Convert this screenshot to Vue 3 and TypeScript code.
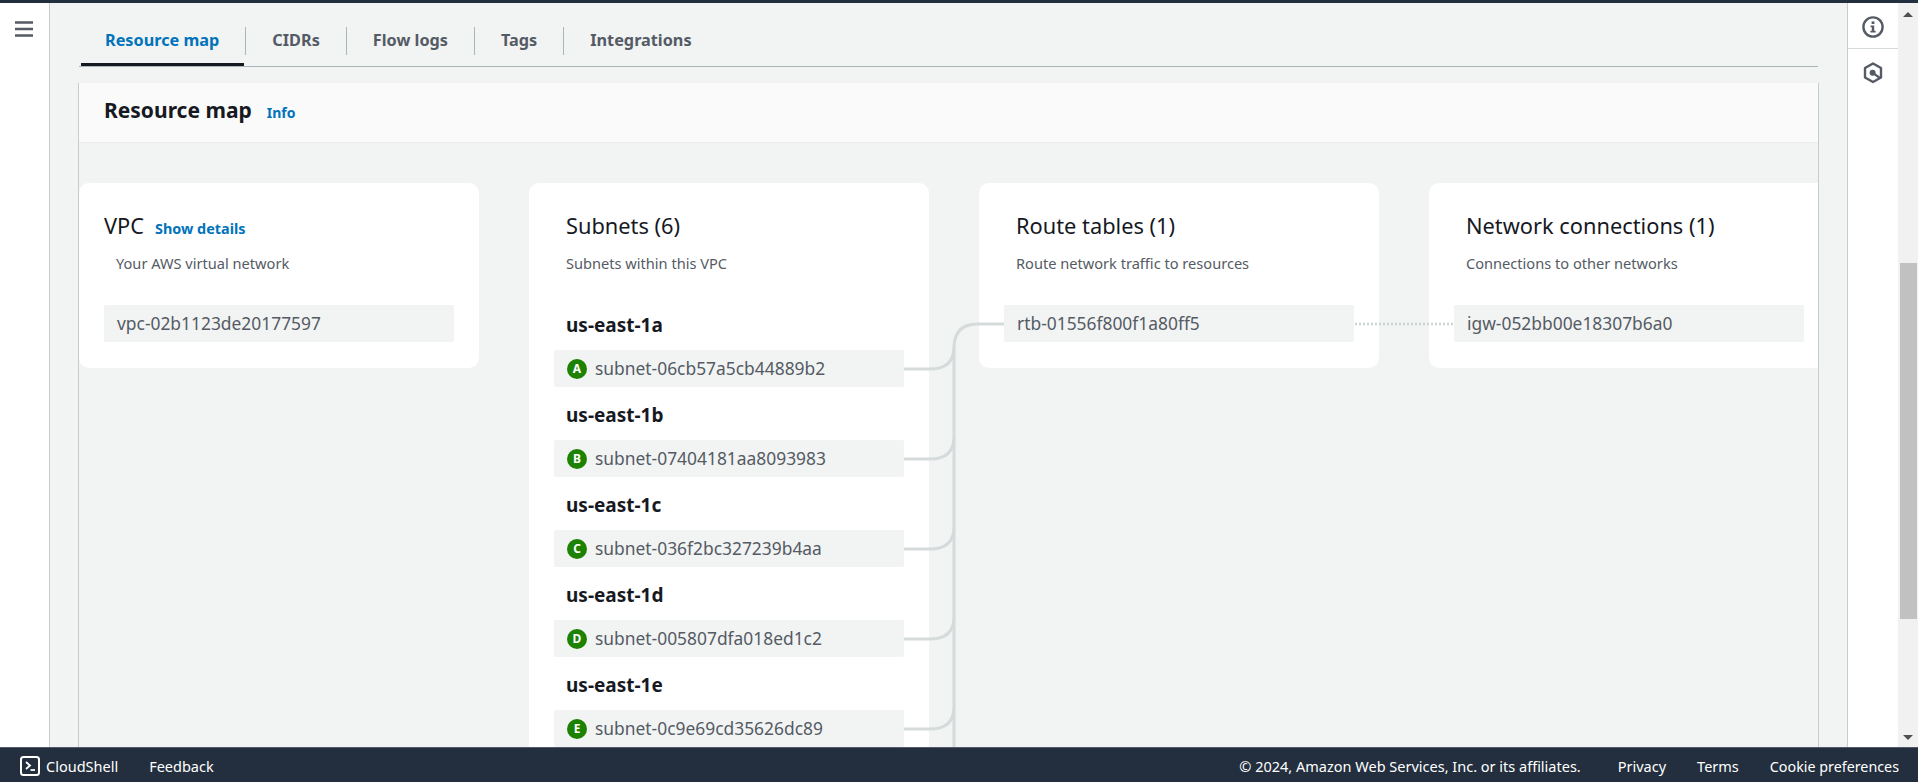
<script setup lang="ts">
const tabs = ['Resource map', 'CIDRs', 'Flow logs', 'Tags', 'Integrations']

const subnets = [
  { zone: 'us-east-1a', badge: 'A', id: 'subnet-06cb57a5cb44889b2' },
  { zone: 'us-east-1b', badge: 'B', id: 'subnet-07404181aa8093983' },
  { zone: 'us-east-1c', badge: 'C', id: 'subnet-036f2bc327239b4aa' },
  { zone: 'us-east-1d', badge: 'D', id: 'subnet-005807dfa018ed1c2' },
  { zone: 'us-east-1e', badge: 'E', id: 'subnet-0c9e69cd35626dc89' }
]

// connector coordinates are relative to the map's top left corner
const routeY = 181
const links = subnets.map((_, i) => {
  const y = 226 + i * 90
  return `M825 ${y} H851 Q875 ${y} 875 ${y - 22}`
})
const trunk = `M875 640 V${routeY + 24} Q875 ${routeY} 899 ${routeY} H925`
</script>

<template>
  <div class="page">
    <div class="top-strip"></div>
    <div class="body">
      <nav class="side-nav">
        <svg class="burger" width="18" height="16" viewBox="0 0 18 16">
          <path d="M0 1.5H18M0 8H18M0 14.5H18" stroke="#545b64" stroke-width="2.6" fill="none" />
        </svg>
      </nav>

      <main class="main">
        <div class="tabs">
          <div v-for="(tab, i) in tabs" :key="tab" class="tab" :class="{ active: i === 0 }">
            <span class="tab-label">{{ tab }}</span>
          </div>
        </div>

        <section class="panel">
          <header class="panel-head">
            <h2>Resource map</h2>
            <a class="info">Info</a>
          </header>

          <div class="map">
            <div class="card">
              <div class="title-row">
                <h3 class="flush">VPC</h3>
                <a class="details">Show details</a>
              </div>
              <p class="desc">Your AWS virtual network</p>
              <div class="item">vpc-02b1123de20177597</div>
            </div>

            <div class="card">
              <div class="title-row"><h3>Subnets (6)</h3></div>
              <p class="desc">Subnets within this VPC</p>
              <div class="zones">
                <div v-for="s in subnets" :key="s.id" class="zone">
                  <h4>{{ s.zone }}</h4>
                  <div class="item with-badge">
                    <span class="badge">{{ s.badge }}</span>
                    {{ s.id }}
                  </div>
                </div>
              </div>
            </div>

            <div class="card">
              <div class="title-row"><h3>Route tables (1)</h3></div>
              <p class="desc">Route network traffic to resources</p>
              <div class="item">rtb-01556f800f1a80ff5</div>
            </div>

            <div class="card">
              <div class="title-row"><h3>Network connections (1)</h3></div>
              <p class="desc">Connections to other networks</p>
              <div class="item">igw-052bb00e18307b6a0</div>
            </div>

            <svg class="links" width="1740" height="640" viewBox="0 0 1740 640" fill="none">
              <path v-for="d in links" :key="d" :d="d" stroke="#d5dbdb" stroke-width="3" />
              <path :d="trunk" stroke="#d5dbdb" stroke-width="3" />
              <path d="M1276 181 H1375" stroke="#ccd3d3" stroke-width="2.4" stroke-dasharray="2 2" />
            </svg>
          </div>
        </section>
      </main>

      <aside class="tools">
        <div class="tool first">
          <svg width="24" height="24" viewBox="0 0 24 24" fill="none">
            <circle cx="12" cy="12" r="9.6" stroke="#545b64" stroke-width="2.4" />
            <rect x="10.6" y="6.4" width="2.8" height="2.6" fill="#545b64" />
            <path d="M9.6 10.4H13.2V15.8H14.6V17.6H9.4V15.8H10.8V12.2H9.6Z" fill="#545b64" />
          </svg>
        </div>
        <div class="tool">
          <svg width="20" height="22" viewBox="0 0 20 22" fill="none">
            <path d="M10 1.5L18 6V15.5L10 20L2 15.5V6Z" stroke="#545b64" stroke-width="2.4" stroke-linejoin="round" />
            <circle cx="9.6" cy="10.8" r="3" fill="#545b64" />
            <path d="M10 11.2L17 16" stroke="#545b64" stroke-width="2.2" />
          </svg>
        </div>
      </aside>

      <div class="scrollbar">
        <span class="arrow up"></span>
        <span class="thumb"></span>
        <span class="arrow down"></span>
      </div>
    </div>

    <footer class="footer">
      <div class="foot-left">
        <span class="shell">
          <svg width="20" height="20" viewBox="0 0 20 20" fill="none">
            <rect x="1" y="1" width="18" height="18" rx="2.5" stroke="#fff" stroke-width="2" />
            <path d="M6 6L10 9.5L6 13" stroke="#fff" stroke-width="1.8" />
            <path d="M10.5 14H15" stroke="#fff" stroke-width="1.8" />
          </svg>
          CloudShell
        </span>
        <span>Feedback</span>
      </div>
      <div class="foot-right">
        <span class="copy">© 2024, Amazon Web Services, Inc. or its affiliates.</span>
        <span>Privacy</span>
        <span>Terms</span>
        <span class="cookie">Cookie preferences</span>
      </div>
    </footer>
  </div>
</template>

<style>
html,
body {
  margin: 0;
  overflow: hidden;
}
</style>

<style scoped>
.page {
  display: flex;
  flex-direction: column;
  height: 782px;
  overflow: hidden;
  font-family: 'Noto Sans', 'Open Sans', sans-serif;
  color: #16191f;
  background: #f2f3f3;
}
.top-strip {
  flex: none;
  height: 3px;
  background: #232f3e;
}
.body {
  flex: 1;
  min-height: 0;
  display: flex;
  overflow: hidden;
}
.side-nav {
  flex: none;
  width: 49px;
  background: #fff;
  border-right: 1px solid #c9cdcd;
}
.burger {
  display: block;
  margin: 18px 0 0 15px;
}
.main {
  flex: 1;
  min-width: 0;
  padding: 0 28px;
  overflow: hidden;
}
.tabs {
  display: flex;
  height: 63px;
  margin: 0 1px;
  border-bottom: 1px solid #aab7b8;
}
.tab {
  position: relative;
  display: flex;
  align-items: center;
  padding: 12px 0 0;
}
.tab-label {
  display: flex;
  align-items: center;
  height: 28px;
  padding: 0 26px 2px;
  box-sizing: border-box;
  border-right: 1px solid #aab7b8;
  font-size: 16.25px;
  font-weight: 700;
  color: #545b64;
}
.tab:last-child .tab-label {
  border-right: 0;
}
.tab.active .tab-label {
  color: #0073bb;
}
.tab.active::after {
  content: '';
  position: absolute;
  left: 2px;
  right: 2px;
  bottom: 0;
  height: 3px;
  background: #16191f;
}
.panel {
  margin-top: 16px;
  border-left: 1px solid #c6cbcb;
  border-right: 1px solid #c6cbcb;
}
.panel-head {
  display: flex;
  align-items: center;
  height: 59px;
  padding-left: 25px;
  background: #fafafa;
  border-bottom: 1px solid #eaeded;
}
.panel-head h2 {
  margin: -5px 0 0;
  font-size: 21px;
  font-weight: 700;
}
.info {
  margin: 0 0 0 15px;
  font-size: 14px;
  font-weight: 700;
  color: #0073bb;
}
.map {
  position: relative;
  display: flex;
  gap: 50px;
  padding-top: 40px;
  overflow: hidden;
}
.card {
  flex: none;
  align-self: flex-start;
  box-sizing: border-box;
  width: 400px;
  padding: 0 25px 26px;
  background: #fff;
  border-radius: 10px;
}
.title-row {
  display: flex;
  align-items: baseline;
  gap: 11px;
  height: 28px;
  padding-top: 29px;
}
h3 {
  margin: 0 0 0 12px;
  font-size: 21.8px;
  font-weight: 400;
  line-height: 28px;
}
h3.flush {
  margin-left: 0;
}
.details {
  font-size: 14.4px;
  font-weight: 700;
  color: #0073bb;
}
.desc {
  margin: 13px 0 32px 12px;
  font-size: 14.6px;
  line-height: 20px;
  color: #545b64;
}
.item {
  display: flex;
  align-items: center;
  box-sizing: border-box;
  height: 37px;
  padding: 0 0 2px 13px;
  background: #f2f3f3;
  border-radius: 2px;
  font-size: 17.4px;
  color: #545b64;
}
.item.with-badge {
  gap: 8px;
}
.zones {
  margin-top: -8px;
  padding-bottom: 60px;
}
.zone h4 {
  margin: 0 0 0 12px;
  height: 53px;
  font-size: 19px;
  line-height: 56px;
  font-weight: 700;
}
.badge {
  display: flex;
  align-items: center;
  justify-content: center;
  width: 20px;
  height: 20px;
  margin-top: 2px;
  border-radius: 50%;
  background: #1d8102;
  color: #fff;
  font-size: 12px;
  font-weight: 700;
}
.links {
  position: absolute;
  top: 0;
  left: 0;
  pointer-events: none;
}
.tools {
  flex: none;
  width: 50px;
  background: #fff;
  border-left: 1px solid #c9cdcd;
}
.tool {
  display: flex;
  justify-content: center;
  padding-top: 13px;
}
.tool.first {
  height: 33px;
  padding-top: 12px;
  border-bottom: 1px solid #d5dbdb;
}
.scrollbar {
  position: relative;
  flex: none;
  width: 20px;
  background: #f1f1f1;
}
.thumb {
  position: absolute;
  top: 260px;
  left: 2px;
  right: 1px;
  height: 356px;
  background: #c1c1c1;
}
.arrow {
  position: absolute;
  left: 5px;
  width: 0;
  height: 0;
  border-left: 5px solid transparent;
  border-right: 5px solid transparent;
}
.arrow.up {
  top: 9px;
  border-bottom: 5px solid #505050;
}
.arrow.down {
  bottom: 7px;
  border-top: 5px solid #505050;
}
.footer {
  flex: none;
  display: flex;
  justify-content: space-between;
  align-items: center;
  box-sizing: border-box;
  height: 35px;
  padding: 1px 19px 0 20px;
  background: #232f3e;
  border-top: 1px solid #545b64;
  color: #fff;
  font-size: 14.5px;
}
.foot-left {
  display: flex;
  gap: 31px;
}
.shell {
  display: flex;
  align-items: center;
  gap: 6px;
}
.foot-right {
  display: flex;
  align-items: baseline;
  gap: 31px;
}
.cookie {
  font-size: 14.3px;
}
.copy {
  margin-right: 6px;
}
</style>
